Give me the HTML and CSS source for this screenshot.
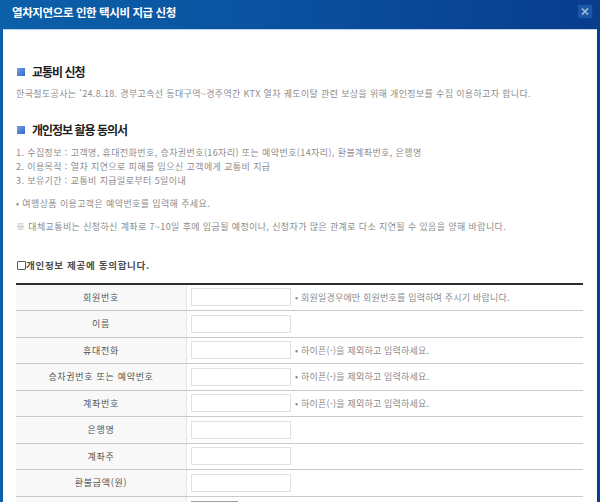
FILE: index.html
```html
<!DOCTYPE html>
<html lang="ko">
<head>
<meta charset="utf-8">
<title>열차지연으로 인한 택시비 지급 신청</title>
<link rel="stylesheet" href="styles.css">
</head>
<body>
<div class="window">
  <div class="titlebar">
    <h1 class="title">열차지연으로 인한 택시비 지급 신청</h1>
    <button class="close" type="button" aria-label="닫기">
      <svg width="16" height="15" viewBox="0 0 16 15"><path d="M5.5 5 L10.5 10 M10.5 5 L5.5 10" stroke="#9fb6d8" stroke-width="1.6" stroke-linecap="square"/></svg>
    </button>
  </div>
  <div class="panel">
    <h2 class="sec-title">교통비 신청</h2>
    <p class="desc">한국철도공사는 '24.8.18. 경부고속선 동대구역~경주역간 KTX 열차 궤도이탈 관련 보상을 위해 개인정보를 수집 이용하고자 합니다.</p>

    <h2 class="sec-title sec-title-2">개인정보 활용 동의서</h2>
    <ul class="terms">
      <li>1. 수집정보 : 고객명, 휴대전화번호, 승차권번호(16자리) 또는 예약번호(14자리), 환불계좌번호, 은행명</li>
      <li>2. 이용목적 : 열차 지연으로 피해를 입으신 고객에게 교통비 지급</li>
      <li>3. 보유기간 : 교통비 지급일로부터 5일이내</li>
    </ul>
    <p class="note">• 여행상품 이용고객은 예약번호를 입력해 주세요.</p>
    <p class="note note-2">※ 대체교통비는 신청하신 계좌로 7~10일 후에 입금될 예정이나, 신청자가 많은 관계로 다소 지연될 수 있음을 양해 바랍니다.</p>

    <label class="agree"><input type="checkbox" class="agree-box">개인정보 제공에 동의합니다.</label>

    <table class="form-table">
      <tr>
        <th>회원번호</th>
        <td><input type="text" class="field"><span class="hint">• 회원일경우에만 회원번호를 입력하여 주시기 바랍니다.</span></td>
      </tr>
      <tr>
        <th>이름</th>
        <td><input type="text" class="field"></td>
      </tr>
      <tr>
        <th>휴대전화</th>
        <td><input type="text" class="field"><span class="hint">• 하이픈(-)을 제외하고 입력하세요.</span></td>
      </tr>
      <tr>
        <th>승차권번호 또는 예약번호</th>
        <td><input type="text" class="field"><span class="hint">• 하이픈(-)을 제외하고 입력하세요.</span></td>
      </tr>
      <tr>
        <th>계좌번호</th>
        <td><input type="text" class="field"><span class="hint">• 하이픈(-)을 제외하고 입력하세요.</span></td>
      </tr>
      <tr>
        <th>은행명</th>
        <td><input type="text" class="field"></td>
      </tr>
      <tr>
        <th>계좌주</th>
        <td><input type="text" class="field"></td>
      </tr>
      <tr>
        <th>환불금액(원)</th>
        <td><input type="text" class="field"></td>
      </tr>
      <tr>
        <th></th>
        <td><span class="file-box"></span></td>
      </tr>
    </table>
  </div>
</div>
</body>
</html>
```

FILE: styles.css
```css
html, body {
  margin: 0;
  padding: 0;
}
body {
  width: 600px;
  height: 502px;
  overflow: hidden;
  font-family: "Noto Sans CJK KR", "Noto Sans", sans-serif;
  background: linear-gradient(to right, #0b60a8 0%, #0a52a0 45%, #083c8c 100%);
}
.window {
  display: flex;
  flex-direction: column;
  height: 502px;
}
.titlebar {
  display: flex;
  justify-content: space-between;
  align-items: flex-start;
  height: 29px;
  flex: none;
}
.title {
  margin: 0;
  padding-left: 12px;
  font-size: 11.5px;
  line-height: 25px;
  font-weight: 700;
  letter-spacing: -0.4px;
  color: #ffffff;
}
.close {
  margin: 4px 7px 0 0;
  padding: 0;
  width: 16px;
  height: 15px;
  border: 1px solid #0d4290;
  background: #1b57a8;
  display: flex;
  align-items: center;
  justify-content: center;
}
.close svg {
  display: block;
  margin: -1px;
}
.panel {
  flex: 1;
  margin: 0 3px;
  padding: 34px 14px 0 13px;
  background: #ffffff;
  border-top: 1px solid #bcd0ea;
  overflow: hidden;
}
.sec-title {
  display: flex;
  align-items: center;
  margin: 0;
  font-size: 12px;
  line-height: 16px;
  font-weight: 700;
  letter-spacing: -1px;
  color: #1e1e1e;
}
.sec-title::before {
  content: "";
  width: 8px;
  height: 8px;
  margin: -1px 7px 0 1px;
  background: linear-gradient(135deg, #6f9fe4 0%, #3668c8 100%);
  flex: none;
}
.sec-title-2 {
  margin-top: 21px;
}
.desc {
  margin: 7px 0 0;
  font-size: 9px;
  line-height: 14px;
  letter-spacing: 0.35px;
  color: #8c8c8c;
}
.terms {
  margin: 7.5px 0 0;
  padding: 0;
  list-style: none;
  font-size: 9px;
  line-height: 14px;
  letter-spacing: 0.4px;
  color: #8c8c8c;
}
.note {
  margin: 9.5px 0 0;
  font-size: 9px;
  line-height: 14px;
  letter-spacing: 0.38px;
  color: #8c8c8c;
}
.note-2 {
  margin-top: 9px;
}
.agree {
  display: flex;
  align-items: center;
  margin-top: 24px;
  height: 14px;
  font-size: 9.5px;
  font-weight: 700;
  letter-spacing: 0.7px;
  color: #4a4a4a;
}
.agree-box {
  appearance: none;
  -webkit-appearance: none;
  width: 9px;
  height: 9px;
  margin: 0 0 0 1px;
  border: 1px solid #5a5a5a;
  border-radius: 1px;
  background: #fff;
  flex: none;
}
.form-table {
  margin-top: 10.5px;
  width: 567px;
  border-collapse: collapse;
  border-top: 2px solid #2e2e2e;
}
.form-table th,
.form-table td {
  height: 25.5px;
  padding: 0;
  border-bottom: 1px solid #c9c9c9;
  font-size: 9px;
  font-weight: 400;
  vertical-align: middle;
}
.form-table th {
  width: 170px;
  background: #f8f8f8;
  border-right: 1px solid #e6e6e6;
  color: #555555;
  letter-spacing: 0.7px;
  text-align: center;
}
.form-table td {
  background: #ffffff;
  text-align: left;
  white-space: nowrap;
}
.field {
  box-sizing: border-box;
  width: 100px;
  height: 18px;
  margin: 0 0 0 4px;
  padding: 0 3px;
  border: 1px solid #e1e1e1;
  vertical-align: middle;
  font-size: 9px;
}
.hint {
  margin-left: 4px;
  font-size: 9px;
  letter-spacing: 0.2px;
  color: #8a8a8a;
  vertical-align: middle;
}
.file-box {
  display: inline-block;
  box-sizing: border-box;
  width: 47px;
  height: 16px;
  margin-left: 4px;
  border: 1px solid #9c9c9c;
  background: #f1f1f1;
  vertical-align: middle;
}
```
